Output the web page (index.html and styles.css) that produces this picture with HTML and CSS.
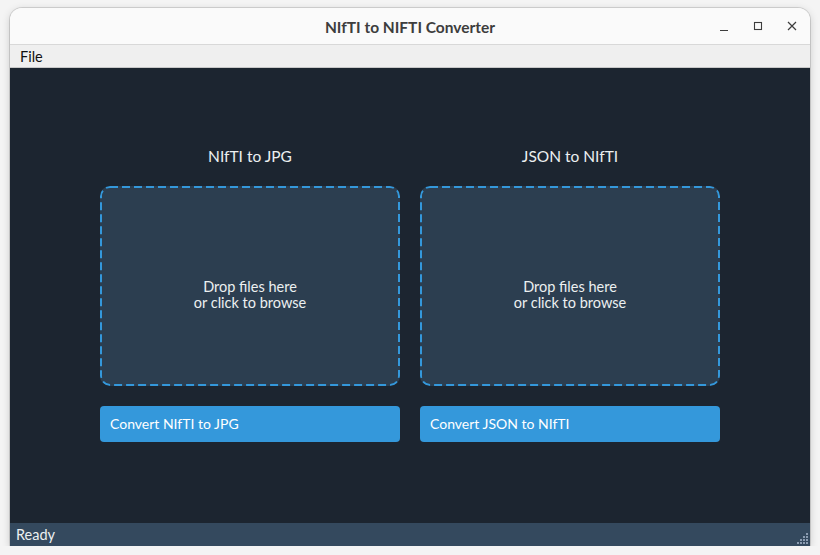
FILE: index.html
```html
<!DOCTYPE html>
<html>
<head>
<meta charset="utf-8">
<link rel="stylesheet" href="styles.css">
</head>
<body>
<div class="window">
  <div class="titlebar">
    <div class="title">NIfTI to NIFTI Converter</div>
    <div class="controls">
      <svg class="ctl" width="12" height="12" viewBox="0 0 12 12"><path d="M2 10.5h8" stroke="#3d3d3d" stroke-width="1.2"/></svg>
      <svg class="ctl" width="12" height="12" viewBox="0 0 12 12"><rect x="2.5" y="2.5" width="7" height="7" fill="none" stroke="#3d3d3d" stroke-width="1.1"/></svg>
      <svg class="ctl" width="12" height="12" viewBox="0 0 12 12"><path d="M2 2L10 10M10 2L2 10" stroke="#3d3d3d" stroke-width="1.2"/></svg>
    </div>
  </div>
  <div class="menubar"><span class="menu-item">File</span></div>
  <div class="content">
    <div class="columns">
      <div class="col">
        <div class="col-title">NIfTI to JPG</div>
        <div class="dropzone">Drop files here<br>or click to browse</div>
        <div class="btn">Convert NIfTI to JPG</div>
      </div>
      <div class="col">
        <div class="col-title">JSON to NIfTI</div>
        <div class="dropzone">Drop files here<br>or click to browse</div>
        <div class="btn">Convert JSON to NIfTI</div>
      </div>
    </div>
  </div>
  <div class="statusbar">
    <span>Ready</span>
    <svg class="grip" width="12" height="12" viewBox="0 0 12 12" fill="#8a9bb0">
      <rect x="9" y="0" width="2" height="2"/>
      <rect x="6" y="3" width="2" height="2"/><rect x="9" y="3" width="2" height="2"/>
      <rect x="3" y="6" width="2" height="2"/><rect x="6" y="6" width="2" height="2"/><rect x="9" y="6" width="2" height="2"/>
      <rect x="0" y="9" width="2" height="2"/><rect x="3" y="9" width="2" height="2"/><rect x="6" y="9" width="2" height="2"/><rect x="9" y="9" width="2" height="2"/>
    </svg>
  </div>
</div>
</body>
</html>
```
FILE: styles.css
```css
html, body {
  margin: 0;
  padding: 0;
  background: #f4f4f4;
  font-family: Lato, "Noto Sans", sans-serif;
}
body {
  padding: 8px 10px 0 10px;
}
.window {
  width: 800px;
  height: 538px;
  display: flex;
  flex-direction: column;
  border-radius: 12px 12px 0 0;
  overflow: hidden;
  box-shadow: 0 0 0 1px rgba(0,0,0,0.12), 0 2px 8px rgba(0,0,0,0.18);
  background: #fafafa;
}
.titlebar {
  height: 36px;
  flex: none;
  display: flex;
  align-items: center;
  justify-content: center;
  position: relative;
  background: #fafafa;
  border-bottom: 1px solid #d8d8d8;
}
.title {
  font-weight: bold;
  font-size: 15.5px;
  color: #3d3d3d;
  padding-top: 1px;
}
.controls {
  position: absolute;
  right: 12px;
  top: 12px;
  display: flex;
  gap: 22px;
}
.ctl { display: block; }
.menubar {
  height: 22px;
  flex: none;
  background: #efefef;
  border-bottom: 1px solid #c8c8c8;
  display: flex;
  align-items: center;
  padding-left: 10px;
  font-size: 14.5px;
  color: #111;
}
.content {
  flex: 1;
  background: #1c2530;
  display: flex;
  align-items: center;
  justify-content: center;
}
.columns {
  display: flex;
  gap: 20px;
  margin-top: -3px;
}
.col {
  width: 300px;
  display: flex;
  flex-direction: column;
  gap: 20px;
}
.col-title {
  height: 20px;
  line-height: 20px;
  text-align: center;
  font-size: 15.5px;
  color: #ecf0f1;
  margin-top: -1px;
}
.dropzone {
  height: 200px;
  box-sizing: border-box;
  padding-top: 18px;
  border-radius: 10px;
  background-color: #2c3e50;
  background-image: url("data:image/svg+xml,%3Csvg xmlns='http://www.w3.org/2000/svg' width='300' height='200'%3E%3Crect x='1' y='1' width='298' height='198' rx='9' ry='9' fill='none' stroke='%233498db' stroke-width='2' stroke-dasharray='8 4'/%3E%3C/svg%3E");
  color: #ecf0f1;
  font-size: 14.5px;
  line-height: 16px;
  display: flex;
  align-items: center;
  justify-content: center;
  text-align: center;
}
.btn {
  height: 36px;
  box-sizing: border-box;
  background: #3498db;
  border-radius: 4px;
  color: #ffffff;
  font-size: 14px;
  display: flex;
  align-items: center;
  padding-left: 10px;
}
.statusbar {
  height: 23px;
  flex: none;
  background: #34495e;
  color: #ecf0f1;
  font-size: 14.5px;
  display: flex;
  align-items: center;
  padding-left: 6px;
  position: relative;
}
.grip {
  position: absolute;
  right: 1px;
  bottom: 1px;
}
```
